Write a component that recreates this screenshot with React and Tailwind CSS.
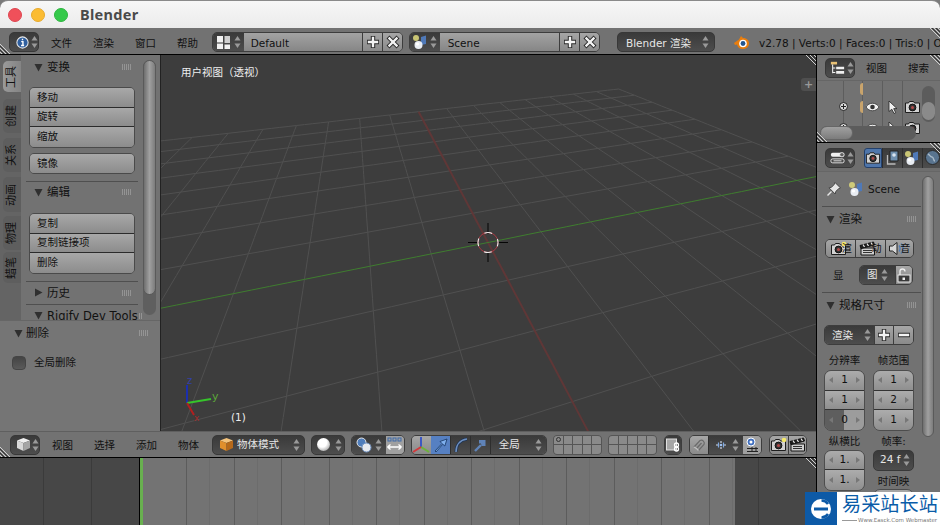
import React from 'react'

const FONT = { fontFamily: '"DejaVu Sans","Noto Sans CJK SC",sans-serif' }

// ground plane projection, fitted by eye against the viewport
const project = (u, v) => {
  const a = 0.1265 * u
  const b = 0.0346 * v
  const d = a + b + 1
  return [(a * 189 + b * 1912 + 327) / d, (a * -72.6 + b * -131 + 187.5) / d]
}

const gridLine = (fn) => {
  const pts = []
  for (let t = 8; t >= -8; t -= 0.25) {
    const [u, v] = fn(t)
    if (0.1265 * u + 0.0346 * v + 1 < 0.06) break
    pts.push(project(u, v).map((n) => n.toFixed(1)).join(','))
  }
  return pts.join(' ')
}

const RANGE = [-8, -7, -6, -5, -4, -3, -2, -1, 0, 1, 2, 3, 4, 5, 6, 7, 8]

const UpDown = () => (
  <svg width="7" height="14" viewBox="0 0 7 14" className="shrink-0">
    <path d="M3.5 1 6.5 5.5H.5z" fill="#9a9a9a" />
    <path d="M3.5 13 6.5 8.5H.5z" fill="#9a9a9a" />
  </svg>
)

const Hatch = ({ className }) => (
  <svg width="12" height="12" viewBox="0 0 12 12" className={className}>
    <path d="M0 2 10 12M0 6 6 12M0 10 2 12" stroke="#d0d0d0" strokeWidth="1" />
    <path d="M0 4 8 12M0 8 4 12" stroke="#333" strokeWidth="1" />
  </svg>
)

const InfoIcon = () => (
  <svg width="15" height="15" viewBox="0 0 15 15">
    <circle cx="7.5" cy="7.5" r="6.5" fill="#2f5f9f" stroke="#e8e8e8" strokeWidth="1.2" />
    <path d="M7.5 3.2v1.8M6 6.5h2v4.3M5.8 11h3.6" stroke="#fff" strokeWidth="1.6" fill="none" />
  </svg>
)

const LayoutIcon = () => (
  <svg width="15" height="15" viewBox="0 0 15 15">
    <path d="M1 1h6v13H1z" fill="#f2f2f2" />
    <path d="M8.5 1H14v7H8.5z" fill="#cfcfcf" />
    <path d="M8.5 9.5H14V14H8.5z" fill="#f2f2f2" />
    <path d="M1 8h6" stroke="#333" />
  </svg>
)

const SceneIcon = () => (
  <svg width="17" height="16" viewBox="0 0 17 16">
    <circle cx="4" cy="4" r="3" fill="#d8d47a" opacity="0.9" />
    <path d="M9 3 14 1.5V10L9 11z" fill="#4f79b8" />
    <circle cx="6.5" cy="11" r="4" fill="#e9edf3" />
    <circle cx="5.5" cy="10" r="1.6" fill="#fff" />
  </svg>
)

const PlusIcon = () => (
  <svg width="16" height="16" viewBox="0 0 16 16">
    <path d="M8 2v12M2 8h12" stroke="#2a2a2a" strokeWidth="4.4" />
    <path d="M8 2.8v10.4M2.8 8h10.4" stroke="#f4f4f4" strokeWidth="2.4" />
  </svg>
)

const MinusIcon = () => (
  <svg width="16" height="16" viewBox="0 0 16 16">
    <path d="M2 8h12" stroke="#2a2a2a" strokeWidth="4.4" />
    <path d="M2.8 8h10.4" stroke="#f4f4f4" strokeWidth="2.4" />
  </svg>
)

const CloseIcon = () => (
  <svg width="16" height="16" viewBox="0 0 16 16">
    <path d="M3 3 13 13M13 3 3 13" stroke="#2a2a2a" strokeWidth="4.2" />
    <path d="M3.6 3.6 12.4 12.4M12.4 3.6 3.6 12.4" stroke="#f4f4f4" strokeWidth="2.2" />
  </svg>
)

const BlenderLogo = () => (
  <svg width="17" height="15" viewBox="0 0 17 15">
    <path d="M1 8 6 4.5 8 1l2 2c4 0 6 2.5 6 5.5S13.5 14 10 14 4.5 12 4 9.5L2 10z" fill="#e87d0d" />
    <circle cx="10" cy="8.5" r="3.8" fill="#fff" />
    <circle cx="10" cy="8.5" r="2.4" fill="#23568f" />
  </svg>
)

const CubeIcon = ({ top = '#f0f0f0', left = '#d8d8d8', right = '#a5a5a5' }) => (
  <svg width="15" height="15" viewBox="0 0 15 15">
    <path d="M7.5 1 14 3.5 7.5 6 1 3.5z" fill={top} />
    <path d="M1 3.5 7.5 6v8L1 11z" fill={left} />
    <path d="M14 3.5 7.5 6v8l6.5-3z" fill={right} />
  </svg>
)

const SphereIcon = () => (
  <svg width="15" height="15" viewBox="0 0 15 15">
    <defs>
      <radialGradient id="ball" cx="0.4" cy="0.35" r="0.7">
        <stop offset="0.5" stopColor="#fff" />
        <stop offset="1" stopColor="#a8a8a8" />
      </radialGradient>
    </defs>
    <circle cx="7.5" cy="7.5" r="6.5" fill="url(#ball)" />
  </svg>
)

const OverlapIcon = () => (
  <svg width="16" height="16" viewBox="0 0 16 16">
    <circle cx="5.5" cy="5.5" r="4.5" fill="#4f7dbb" stroke="#e6e6e6" />
    <circle cx="10.5" cy="10.5" r="4.5" fill="#e6e9ee" stroke="#6d8fbe" />
  </svg>
)

const ProportionalIcon = () => (
  <svg width="17" height="17" viewBox="0 0 17 17">
    <g fill="none" stroke="#3f6aa8" strokeWidth="1">
      <rect x="2" y="2" width="3" height="3" />
      <rect x="7" y="2" width="3" height="3" />
      <rect x="12" y="2" width="3" height="3" />
    </g>
    <path d="M1.5 11h14M1.5 11l3-2.5M1.5 11l3 2.5M15.5 11l-3-2.5M15.5 11l-3 2.5" stroke="#fff" strokeWidth="1.3" fill="none" />
  </svg>
)

const AxesIcon = () => (
  <svg width="18" height="18" viewBox="0 0 18 18">
    <path d="M9 11V1" stroke="#3c57c2" strokeWidth="2" />
    <path d="M9 11 17 16" stroke="#6cb33a" strokeWidth="2" />
    <path d="M9 11 1 16" stroke="#d2393c" strokeWidth="2" />
  </svg>
)

const ArrowIcon = ({ stroke = '#15335f', fill = '#7fb0ee' }) => (
  <svg width="16" height="16" viewBox="0 0 16 16">
    <path d="M2 14 9 6.5 7 4.5 14 2 11.8 9 9.8 7.2 3 15z" fill={fill} stroke={stroke} strokeWidth="0.8" />
  </svg>
)

const ArcIcon = () => (
  <svg width="16" height="16" viewBox="0 0 16 16">
    <path d="M3 15C3 8 7 3 14 2" fill="none" stroke="#1e3454" strokeWidth="3" />
    <path d="M3 15C3 8 7 3 14 2" fill="none" stroke="#6d8fc0" strokeWidth="1.6" />
  </svg>
)

const ScaleIcon = () => (
  <svg width="16" height="16" viewBox="0 0 16 16">
    <path d="M3 14 9 8" stroke="#5f83b8" strokeWidth="2.4" />
    <path d="M7 3h6.5v6H9.5L9 6.5H7z" fill="#5f83b8" />
  </svg>
)

const LockIcon = () => (
  <svg width="16" height="16" viewBox="0 0 16 16">
    <rect x="1.5" y="2" width="10" height="11" fill="#a5a5a5" stroke="#e0e0e0" />
    <rect x="9.5" y="6" width="4" height="4" rx="2" fill="none" stroke="#fff" strokeWidth="1.3" />
    <rect x="9.5" y="10" width="4" height="4" rx="2" fill="none" stroke="#fff" strokeWidth="1.3" />
  </svg>
)

const MagnetIcon = () => (
  <svg width="16" height="16" viewBox="0 0 16 16">
    <path d="M3 10 9 3.5a3 3 0 0 1 4 4L7.5 13.5" fill="none" stroke="#6a6a6a" strokeWidth="1.2" />
    <path d="M5.5 11.5 10.5 6" fill="none" stroke="#6a6a6a" strokeWidth="1.2" />
    <path d="M3 10 5.5 11.5 7.5 13.5" fill="none" stroke="#c0c0c0" strokeWidth="1.2" />
  </svg>
)

const SnapModeIcon = () => (
  <svg width="14" height="14" viewBox="0 0 14 14">
    <path d="M2 7h2.5M9.5 7H12M7 3v2M7 9v2" stroke="#cfd8e8" strokeWidth="1.2" />
    <path d="M4.5 4.5V9.5M9.5 4.5V9.5" stroke="#7fa8e0" strokeWidth="1.2" />
    <circle cx="7" cy="7" r="1.3" fill="#9dc0f0" />
  </svg>
)

const SnapIcon = () => (
  <svg width="16" height="16" viewBox="0 0 16 16">
    <path d="M3 11.5h11M8 10v5M12 10v5M3 14.5h11" stroke="#222" strokeWidth="1" />
    <circle cx="7" cy="5" r="4" fill="#3f6fc0" stroke="#fff" />
    <circle cx="7" cy="5" r="1.5" fill="#fff" />
  </svg>
)

const CameraIcon = ({ spark = true }) => (
  <svg width="17" height="15" viewBox="0 0 17 15">
    <path d="M1.5 4h3l1-1.5h4l1 1.5h5v9.500h-14z" fill="#d2d2d2" stroke="#1d1d1d" />
    <circle cx="8.5" cy="8.5" r="3.4" fill="#333" stroke="#111" />
    <circle cx="8.5" cy="8.5" r="1.5" fill="#b04a4a" />
    {spark && <circle cx="14" cy="3" r="2.3" fill="#f5e96a" />}
  </svg>
)

const ClapperIcon = () => (
  <svg width="17" height="15" viewBox="0 0 17 15">
    <path d="M2 7h13.5v7H2z" fill="#cfcfcf" stroke="#151515" />
    <path d="M1 4.5 14.5 1l1 3L2 7.5z" fill="#222" stroke="#111" />
    <path d="M4 3.5 5.5 6M8 2.5 9.5 5M12 1.5 13.5 4" stroke="#eee" strokeWidth="1.2" />
    <path d="M4 9.5h9M4 11.5h9" stroke="#333" />
  </svg>
)

const SpeakerIcon = () => (
  <svg width="17" height="15" viewBox="0 0 17 15">
    <path d="M1.5 5h3L9 1.5v12L4.5 10h-3z" fill="#d8d8d8" stroke="#222" />
    <path d="M11 4.5c1.5 2 1.5 4 0 6" fill="none" stroke="#4f7dbb" strokeWidth="1.3" />
    <path d="M13 2.5c2.5 3 2.5 7 0 10" fill="none" stroke="#4f7dbb" strokeWidth="1.3" />
  </svg>
)

const OutlinerIcon = () => (
  <svg width="17" height="16" viewBox="0 0 17 16">
    <path d="M1 1h7v3H1z" fill="#e8c074" />
    <path d="M3 4v10M3 8h3M3 13h3" stroke="#f0f0f0" strokeWidth="1.2" fill="none" />
    <path d="M7 6.5h9v3H7zM7 11.5h9v3H7z" fill="#f0f0f0" />
  </svg>
)

const PropertiesIcon = () => (
  <svg width="17" height="14" viewBox="0 0 17 14">
    <rect x="1" y="1" width="15" height="4.5" rx="2" fill="#f0f0f0" />
    <rect x="11" y="1" width="5" height="4.5" rx="2" fill="#5f5f5f" stroke="#f0f0f0" />
    <rect x="1" y="8" width="15" height="4.5" rx="2" fill="#4a4a4a" stroke="#f0f0f0" />
    <path d="M4 10.2h9" stroke="#f0f0f0" />
  </svg>
)

const ImageIcon = () => (
  <svg width="16" height="15" viewBox="0 0 16 15">
    <path d="M5 1h8v10H5z" fill="#6f8fae" stroke="#222" />
    <path d="M2.5 5v9h8" fill="none" stroke="#bbb" strokeWidth="1.3" />
    <circle cx="9" cy="5" r="1.8" fill="#d9e3ee" />
  </svg>
)

const WorldIcon = () => (
  <svg width="17" height="17" viewBox="0 0 17 17">
    <circle cx="8.5" cy="8.5" r="7" fill="#59748f" stroke="#2a2a2a" />
    <path d="M4 5c2 1 2 3 4 3s1 4 3 4" fill="none" stroke="#a9b9c7" strokeWidth="1.4" />
  </svg>
)

const PinIcon = () => (
  <svg width="16" height="16" viewBox="0 0 16 16">
    <path d="M9 1.5 14.5 7 12.5 7.8 9.7 10.5 9.2 13 3 6.8 5.5 6.3 8.2 3.5z" fill="#e6e6e6" stroke="#333" strokeWidth="0.8" />
    <path d="M5.5 10.5 1.5 14.5" stroke="#e6e6e6" strokeWidth="1.5" />
  </svg>
)

const Eye = () => (
  <svg width="15" height="10" viewBox="0 0 15 10">
    <path d="M1 5c3-5 10-5 13 0-3 5-10 5-13 0z" fill="#f0f0f0" stroke="#333" strokeWidth="0.8" />
    <circle cx="7.5" cy="5" r="2.3" fill="#333" />
  </svg>
)

const Cursor = () => (
  <svg width="10" height="14" viewBox="0 0 10 14">
    <path d="M1 1v10.5l2.800-2.300L6 13.5l1.700-.8-2-4.100H9z" fill="#f0f0f0" stroke="#222" strokeWidth="0.8" />
  </svg>
)

const PlusCircle = () => (
  <svg width="9" height="9" viewBox="0 0 9 9">
    <circle cx="4.5" cy="4.5" r="4" fill="#d8d8d8" stroke="#222" />
    <path d="M4.5 2v5M2 4.5h5" stroke="#222" />
  </svg>
)

const Triangle = ({ open = true }) => (
  <svg width="9" height="9" viewBox="0 0 9 9" className="shrink-0">
    <path d={open ? 'M0.5 1h8L4.5 8.5z' : 'M1 0.5 8.5 4.5 1 8.5z'} fill="#2f2f2f" />
  </svg>
)

const Grip = () => (
  <svg width="12" height="6" viewBox="0 0 12 6" className="shrink-0">
    <path d="M1 1h10M1 3h10M1 5h10" stroke="#b5b5b5" strokeDasharray="1 1" />
  </svg>
)

const Sel = ({ className = '', children }) => (
  <div className={`flex items-center h-[20px] rounded-[5px] border border-[#383838] bg-linear-to-b from-[#3a3a3a] to-[#4d4d4d] text-[#e6e6e6] ${className}`}>
    {children}
  </div>
)

const Group = ({ className = '', children }) => (
  <div className={`flex h-[20px] rounded-[5px] overflow-hidden border border-[#3d3d3d] shrink-0 ${className}`}>{children}</div>
)

const IconCell = ({ className = '', children }) => (
  <div className={`flex items-center justify-center h-full bg-linear-to-b from-[#a6a6a6] to-[#8a8a8a] border-l border-[#3d3d3d] first:border-l-0 ${className}`}>
    {children}
  </div>
)

const DarkCell = ({ className = '', children }) => (
  <div className={`flex items-center justify-center h-full bg-linear-to-b from-[#3a3a3a] to-[#4d4d4d] border-l border-[#2e2e2e] first:border-l-0 ${className}`}>
    {children}
  </div>
)

// dark cell holding a label on the left and the up/down arrows on the right
const DarkLabelCell = ({ className = '', label }) => (
  <div className={`flex items-center justify-between h-full bg-linear-to-b from-[#3a3a3a] to-[#4d4d4d] border-l border-[#2e2e2e] text-[10.5px] text-[#e6e6e6] ${className}`}>
    <span className="pt-[1px]">{label}</span>
    <UpDown />
  </div>
)

const Layers = ({ dot = false }) => (
  <div className="grid grid-cols-5 grid-rows-2 w-[49px] h-[20px] rounded-[4px] overflow-hidden border border-[#555] bg-[#555] gap-px shrink-0">
    {Array.from({ length: 10 }, (_, i) => (
      <div key={i} className="bg-[#8a8a8a] flex items-center justify-center">
        {dot && i === 0 && <div className="w-[5px] h-[5px] rounded-full border border-[#333]" />}
      </div>
    ))}
  </div>
)

const Menus = ({ items, className = '' }) => (
  <div className={`flex gap-[21px] text-[10.5px] text-[#111] ${className}`}>
    {items.map((m) => (
      <span key={m} className="w-[21px] whitespace-nowrap">{m}</span>
    ))}
  </div>
)

const TopBar = () => (
  <div className="relative flex items-center h-[27px] pt-[2px] pl-[9px] bg-[#727272] border-b border-black overflow-hidden">
    <Hatch className="absolute left-0 bottom-0" />
    <Hatch className="absolute right-0 top-0 rotate-180" />
    <Sel className="w-[30px] shrink-0 pl-[6px] gap-[2px]"><InfoIcon /><UpDown /></Sel>
    <Menus items={['文件', '渲染', '窗口', '帮助']} className="ml-[12px] pt-[4px]" />
    <Group className="ml-[14px] w-[191px]">
      <DarkCell className="w-[31px] gap-[3px]"><LayoutIcon /><UpDown /></DarkCell>
      <div className="w-[120px] flex items-center pl-[7px] pt-[4px] text-[10.5px] text-[#111] bg-linear-to-b from-[#a3a3a3] to-[#868686]">Default</div>
      <IconCell className="w-[20px]"><PlusIcon /></IconCell>
      <IconCell className="w-[20px]"><CloseIcon /></IconCell>
    </Group>
    <Group className="ml-[6px] w-[191px]">
      <DarkCell className="w-[30px] gap-[1px]"><SceneIcon /><UpDown /></DarkCell>
      <div className="w-[121px] flex items-center pl-[8px] pt-[4px] text-[10.5px] text-[#111] bg-linear-to-b from-[#a3a3a3] to-[#868686]">Scene</div>
      <IconCell className="w-[20px]"><PlusIcon /></IconCell>
      <IconCell className="w-[20px]"><CloseIcon /></IconCell>
    </Group>
    <Sel className="ml-[17px] w-[98px] shrink-0 pl-[8px] pr-[5px] justify-between text-[10.5px]"><span className="pt-[4px]">Blender 渲染</span><UpDown /></Sel>
    <div className="ml-[18px] shrink-0"><BlenderLogo /></div>
    <span className="ml-[9px] pt-[4px] text-[10.5px] text-[#111] whitespace-nowrap">v2.78 | Verts:0 | Faces:0 | Tris:0 | Objects:0/3</span>
  </div>
)

const SectionHead = ({ title, open = true, className = '' }) => (
  <div className={`flex items-center shrink-0 ${className}`}>
    <Triangle open={open} />
    <span className="ml-[4px] pt-[2px] flex-1 text-[11.5px] text-[#111] whitespace-nowrap">{title}</span>
    <Grip />
  </div>
)

const Divider = ({ className = '' }) => <div className={`h-px bg-[#4f4f4f] ${className}`} />

const ToolGroup = ({ items, className = '' }) => (
  <div className={`w-[106px] shrink-0 rounded-[5px] overflow-hidden border border-[#4a4a4a] ${className}`}>
    {items.map((t) => (
      <div key={t} className="h-[19.5px] pl-[7px] pt-[1px] flex items-center text-[10.5px] text-[#111] bg-linear-to-b from-[#a8a8a8] to-[#8c8c8c] border-b border-[#2b2b2b] last:border-b-0 whitespace-nowrap">
        {t}
      </div>
    ))}
  </div>
)

const TABS = [
  { label: '工具', cls: 'h-[31px] mt-[6px] bg-linear-to-r from-[#9a9a9a] to-[#848484]' },
  { label: '创建', cls: 'h-[34px] mt-[7px] bg-[#5e5e5e]' },
  { label: '关系', cls: 'h-[34px] mt-[5px] bg-[#5e5e5e]' },
  { label: '动画', cls: 'h-[35px] mt-[5px] bg-[#5e5e5e]' },
  { label: '物理', cls: 'h-[34px] mt-[4px] bg-[#5e5e5e]' },
  { label: '蜡笔', cls: 'h-[31px] mt-[2px] bg-[#5e5e5e]' },
]

const LeftPanel = () => (
  <div className="w-[160px] shrink-0 flex flex-col">
    <div className="h-[265px] flex bg-[#727272] overflow-hidden">
      <div className="w-[21px] shrink-0 bg-[#646464] flex flex-col items-end">
        {TABS.map((t) => (
          <div key={t.label} className={`w-[18px] shrink-0 rounded-l-[5px] flex items-center justify-center text-[11px] text-[#111] ${t.cls}`}>
            <span className="[writing-mode:vertical-rl] [text-orientation:sideways] rotate-180 whitespace-nowrap">{t.label}</span>
          </div>
        ))}
      </div>
      <div className="w-[122px] shrink-0 overflow-hidden flex flex-col">
        <SectionHead title="变换" className="h-[24px] ml-[13px] mr-[10px]" />
        <ToolGroup items={['移动', '旋转', '缩放']} className="mt-[8px] ml-[8px]" />
        <ToolGroup items={['镜像']} className="mt-[5px] ml-[8px]" />
        <Divider className="mt-[7px] mx-[5px] shrink-0" />
        <SectionHead title="编辑" className="h-[20px] ml-[13px] mr-[10px]" />
        <ToolGroup items={['复制', '复制链接项', '删除']} className="mt-[11px] ml-[8px]" />
        <Divider className="mt-[7px] mx-[5px] shrink-0" />
        <SectionHead title="历史" open={false} className="h-[22px] ml-[13px] mr-[10px]" />
        <Divider className="mx-[5px] shrink-0" />
        <SectionHead title="Rigify Dev Tools" className="h-[22px] ml-[13px] mr-[10px]" />
      </div>
      <div className="w-[13px] shrink-0 mt-[5px] h-[255px] rounded-full bg-[#5f5f5f]">
        <div className="h-[235px] rounded-full border border-[#5a5a5a] bg-linear-to-r from-[#6f6f6f] via-[#a0a0a0] to-[#7c7c7c]" />
      </div>
    </div>
    <div className="flex-1 bg-[#757575] border-t border-[#666] pl-[12px] pr-[10px]">
      <div className="flex items-center h-[24px] pl-[2px]">
        <Triangle />
        <span className="ml-[3px] pt-[2px] flex-1 text-[11.5px] text-[#111]">删除</span>
        <Grip />
      </div>
      <div className="flex items-center mt-[10px]">
        <div className="w-[14px] h-[14px] rounded-[4px] border border-[#454545] bg-linear-to-b from-[#444] to-[#5a5a5a]" />
        <span className="ml-[8px] text-[10.5px] text-[#111]">全局删除</span>
      </div>
    </div>
  </div>
)

const Viewport = () => (
  <div className="relative w-[656px] shrink-0 border-l border-[#222] bg-[#3d3d3d] overflow-hidden">
    <svg width="656" height="376" viewBox="0 0 656 376" className="block">
      {RANGE.filter((n) => n !== 0).map((n) => (
        <g key={n} fill="none" stroke="#505050" strokeWidth="1">
          <polyline points={gridLine((t) => [t, n])} />
          <polyline points={gridLine((t) => [n, t])} />
        </g>
      ))}
      <polyline points={gridLine((t) => [t, 0])} fill="none" stroke="#5f3737" strokeWidth="2" />
      <polyline points={gridLine((t) => [0, t])} fill="none" stroke="#3f7d2f" strokeWidth="1" />
      <path d="M327 168v11M327 197v10M307 187.5h11M336 187.5h11" stroke="#050505" strokeWidth="1" />
      <circle cx="327" cy="187.5" r="10" fill="none" stroke="#a83a44" strokeWidth="1" />
      <circle cx="327" cy="187.5" r="10" fill="none" stroke="#eeeeee" strokeWidth="1.1" strokeDasharray="7.85 7.85" strokeDashoffset="3.9" />
      <path d="M26 348V330" stroke="#1b2fae" strokeWidth="2" />
      <path d="M26 348 50 344" stroke="#36c42b" strokeWidth="2" />
      <path d="M26 348 33 360" stroke="#b11f1f" strokeWidth="2" />
      <text x="26" y="329" fontSize="10" fill="#3340a8" style={FONT}>z</text>
      <text x="51" y="345" fontSize="11" fill="#5ca53a" style={FONT}>y</text>
      <text x="33" y="366" fontSize="9" fill="#a32a2a" style={FONT}>x</text>
    </svg>
    <span className="absolute left-[20px] top-[10px] text-[10.5px] text-[#eee] whitespace-nowrap">用户视图（透视）</span>
    <span className="absolute left-[70px] top-[355px] text-[10.5px] text-[#eee]">(1)</span>
    <div className="absolute left-[640px] top-[23px] w-[15px] h-[13px] rounded-l-[3px] bg-[#4f4f4f] flex items-center justify-center text-[11px] font-bold leading-none text-[#999]">+</div>
    <Hatch className="absolute right-0 top-0 rotate-180" />
  </div>
)

const TreeRow = ({ icons = true, clipped = false, className = '' }) => (
  <div className={`flex shrink-0 ${className}`}>
    <div className="w-[26px]" />
    <div className="w-[19px] border-l border-[#5d5d5d] flex items-center relative">
      {icons && <div className="absolute -left-[5px] flex items-center"><PlusCircle /></div>}
      {!clipped && <div className="ml-auto -mr-[1px] w-[3px] h-[12px] rounded-l-full bg-[#c9a46c]" />}
    </div>
    <div className="w-[20px] border-l border-[#5d5d5d] flex items-center justify-center">{icons && <Eye />}</div>
    <div className="w-[20px] border-l border-[#5d5d5d] flex items-center justify-center">{icons && <Cursor />}</div>
    <div className="w-[20px] border-l border-[#5d5d5d] flex items-center justify-center">{icons && <CameraIcon spark={false} />}</div>
  </div>
)

const Outliner = () => (
  <div className="relative h-[88px] shrink-0 bg-[#727272] border-b border-black overflow-hidden">
    <Hatch className="absolute right-0 top-0 rotate-180" />
    <div className="flex items-center h-[26px] pl-[8px] border-b border-[#666]">
      <Sel className="w-[30px] shrink-0 pl-[4px] gap-[2px]"><OutlinerIcon /><UpDown /></Sel>
      <Menus items={['视图', '搜索']} className="ml-[11px] pt-[2px]" />
    </div>
    <TreeRow icons={false} className="h-[15px]" />
    <TreeRow className="h-[21px]" />
    <TreeRow clipped className="h-[21px]" />
    <div className="absolute left-[3px] top-[71px] w-[96px] h-[14px] rounded-full bg-[#5c5c5c]">
      <div className="w-[33px] h-full rounded-full bg-linear-to-b from-[#a0a0a0] to-[#7c7c7c] border border-[#666]" />
    </div>
    <div className="absolute left-[105px] top-[31px] w-[13px] h-[36px] rounded-full bg-[#5c5c5c]">
      <div className="mt-[16px] h-[18px] rounded-full bg-[#8a8a8a]" />
    </div>
    <Hatch className="absolute left-0 bottom-0" />
  </div>
)

const NumRow = ({ value, slider = false }) => (
  <div className={`relative h-[19.5px] flex items-center justify-between px-[4px] text-[10.5px] text-[#111] border-b border-[#333] last:border-b-0 ${slider ? 'bg-linear-to-r from-[#5e5e5e] from-50% to-[#9c9c9c] to-50%' : 'bg-linear-to-b from-[#acacac] to-[#8f8f8f]'}`}>
    <span className="w-0 h-0 border-y-[3px] border-y-transparent border-r-[4px] border-r-[#777]" />
    <span>{value}</span>
    <span className="w-0 h-0 border-y-[3px] border-y-transparent border-l-[4px] border-l-[#777]" />
  </div>
)

const NumGroup = ({ rows }) => (
  <div className="w-[41px] h-fit rounded-[7px] overflow-hidden border border-[#4d4d4d] shrink-0">
    {rows.map((r, i) => <NumRow key={i} value={r.v} slider={r.slider} />)}
  </div>
)

const Properties = () => (
  <div className="flex-1 bg-[#727272] flex flex-col overflow-hidden relative">
    <Hatch className="absolute right-0 top-0 rotate-180 z-10" />
    <div className="flex items-center h-[29px] shrink-0 pl-[8px] pt-[1px] bg-[#6e6e6e] border-b border-[#666]">
      <Sel className="w-[30px] shrink-0 pl-[4px] gap-[2px]"><PropertiesIcon /><UpDown /></Sel>
      <div className="flex h-[20px] ml-[9px] shrink-0">
        <div className="w-[18px] h-full flex items-center justify-center rounded-l-[3px] bg-[#4f76ab] border border-[#24406a]"><CameraIcon spark={false} /></div>
        <DarkCell className="w-[20px]"><ImageIcon /></DarkCell>
        <DarkCell className="w-[20px]"><SceneIcon /></DarkCell>
        <DarkCell className="w-[20px]"><WorldIcon /></DarkCell>
      </div>
    </div>
    <div className="flex flex-1 min-h-0">
      <div className="w-[104px] shrink-0 flex flex-col">
        <div className="flex items-center h-[34px] shrink-0 pl-[9px]">
          <PinIcon />
          <div className="ml-[6px]"><SceneIcon /></div>
          <span className="ml-[3px] pt-[2px] text-[10.5px] text-[#111]">Scene</span>
        </div>
        <Divider className="ml-[5px] shrink-0" />
        <div className="h-[24px] ml-[9px] mr-[3px] shrink-0 flex items-center">
          <SectionHead title="渲染" className="w-full" />
        </div>
        <div className="ml-[8px] mt-[8px] w-[89px] h-[19px] flex rounded-[5px] overflow-hidden border border-[#3d3d3d] shrink-0 text-[10px] text-[#111]">
          <IconCell className="w-[30px] gap-0"><CameraIcon /><span className="-ml-[5px]">渲</span></IconCell>
          <IconCell className="w-[30px] gap-0"><ClapperIcon /><span className="-ml-[5px]">动</span></IconCell>
          <IconCell className="w-[29px] gap-0"><SpeakerIcon /><span className="-ml-[5px]">音</span></IconCell>
        </div>
        <div className="flex items-center mt-[7px] h-[20px] shrink-0 ml-[16px] text-[10.5px] text-[#111]">
          <span className="w-[26px] pt-[1px]">显</span>
          <Group className="w-[54px]">
            <DarkCell className="w-[36px] gap-[3px] text-[#e6e6e6]"><span>图</span><UpDown /></DarkCell>
            <IconCell className="w-[18px]">
              <svg width="14" height="15" viewBox="0 0 14 15">
                <path d="M3 7V3.5a2.5 2.5 0 0 1 5 0" fill="none" stroke="#eee" strokeWidth="1.3" />
                <rect x="1" y="7" width="12" height="7" fill="#3a3a3a" stroke="#eee" />
                <rect x="5.5" y="9.5" width="2.5" height="2.5" fill="#eee" />
              </svg>
            </IconCell>
          </Group>
        </div>
        <Divider className="mt-[7px] ml-[5px] shrink-0" />
        <div className="h-[24px] ml-[9px] mr-[3px] shrink-0 flex items-center">
          <SectionHead title="规格尺寸" className="w-full" />
        </div>
        <Group className="ml-[7px] mt-[8px] w-[90px]">
          <DarkLabelCell label="渲染" className="w-[50px] pl-[7px] pr-[3px] border-l-0" />
          <IconCell className="w-[20px]"><PlusIcon /></IconCell>
          <IconCell className="w-[20px]"><MinusIcon /></IconCell>
        </Group>
        <div className="flex mt-[8px] ml-[7px] gap-[8px] h-[15px] shrink-0 text-[10.5px] text-[#111] leading-[15px]">
          <span className="w-[41px] text-center whitespace-nowrap">分辨率</span>
          <span className="w-[41px] text-center whitespace-nowrap">帧范围</span>
        </div>
        <div className="flex ml-[7px] mt-[2px] gap-[8px] shrink-0">
          <NumGroup rows={[{ v: '1' }, { v: '1' }, { v: '0', slider: true }]} />
          <NumGroup rows={[{ v: '1' }, { v: '2' }, { v: '1' }]} />
        </div>
        <div className="flex mt-[3px] ml-[7px] gap-[8px] h-[15px] shrink-0 text-[10.5px] text-[#111] leading-[15px]">
          <span className="w-[41px] text-center whitespace-nowrap">纵横比</span>
          <span className="w-[41px] text-center whitespace-nowrap">帧率:</span>
        </div>
        <div className="flex ml-[7px] mt-[1px] gap-[8px] shrink-0">
          <NumGroup rows={[{ v: '1.' }, { v: '1.' }]} />
          <div className="flex flex-col w-[41px] shrink-0 text-[10.5px] text-[#111]">
            <Sel className="justify-between pl-[6px] pr-[3px] h-[21px]"><span>24 f</span><UpDown /></Sel>
            <span className="text-center mt-[3px] leading-[15px] whitespace-nowrap">时间映</span>
            <div className="h-[8px] rounded-t-[7px] border border-[#4d4d4d] bg-[#a5a5a5]" />
          </div>
        </div>
      </div>
      <div className="w-[12px] ml-[1px] shrink-0 mt-[4px] h-[261px] rounded-full border border-[#5a5a5a] bg-linear-to-r from-[#6f6f6f] via-[#a0a0a0] to-[#7c7c7c]" />
    </div>
  </div>
)

const RightPanel = () => (
  <div className="flex-1 min-w-0 flex flex-col border-l border-black overflow-hidden">
    <Outliner />
    <Properties />
  </div>
)

const BottomBar = () => (
  <div className="relative flex items-center h-[27px] pl-[10px] bg-[#727272] border-t border-[#5f5f5f] border-b-black border-b overflow-hidden">
    <Hatch className="absolute left-0 bottom-0" />
    <Sel className="w-[30px] shrink-0 pl-[5px] gap-[1px]"><CubeIcon /><UpDown /></Sel>
    <Menus items={['视图', '选择', '添加', '物体']} className="ml-[12px] pt-[2px]" />
    <Sel className="ml-[13px] w-[93px] shrink-0 pl-[6px] pr-[4px] text-[10.5px]">
      <CubeIcon top="#f3c27b" left="#e08f2c" right="#b5691a" />
      <span className="ml-[3px] pt-[1px] flex-1 whitespace-nowrap">物体模式</span>
      <UpDown />
    </Sel>
    <Sel className="ml-[6px] w-[34px] shrink-0 pl-[4px] gap-[4px]"><SphereIcon /><UpDown /></Sel>
    <Group className="ml-[6px] w-[54px]">
      <DarkCell className="w-[35px] gap-[3px]"><OverlapIcon /><UpDown /></DarkCell>
      <div className="w-[19px] flex items-center justify-center bg-[#a0a0a0]"><ProportionalIcon /></div>
    </Group>
    <Group className="ml-[6px] w-[136px]">
      <IconCell className="w-[19px]"><AxesIcon /></IconCell>
      <div className="w-[20px] flex items-center justify-center bg-[#5680c2]"><ArrowIcon /></div>
      <DarkCell className="w-[20px]"><ArcIcon /></DarkCell>
      <DarkCell className="w-[20px]"><ScaleIcon /></DarkCell>
      <DarkLabelCell label="全局" className="w-[57px] pl-[8px] pr-[4px]" />
    </Group>
    <div className="ml-[6px] shrink-0"><Layers dot /></div>
    <div className="ml-[6px] shrink-0"><Layers /></div>
    <Group className="ml-[7px] w-[18px]"><DarkCell className="w-full"><LockIcon /></DarkCell></Group>
    <Group className="ml-[7px] w-[73px]">
      <IconCell className="w-[19px]"><MagnetIcon /></IconCell>
      <DarkCell className="w-[35px] gap-[4px]"><SnapModeIcon /><UpDown /></DarkCell>
      <div className="w-[19px] flex items-center justify-center bg-[#a0a0a0]"><SnapIcon /></div>
    </Group>
    <Group className="ml-[7px] w-[38px]">
      <IconCell className="w-[19px]"><CameraIcon /></IconCell>
      <IconCell className="w-[19px]"><ClapperIcon /></IconCell>
    </Group>
  </div>
)

const LIGHT_CELLS = [0, 1, 2, 3, 4, 5, 6, 7, 8, 9, 10, 11]

const Timeline = () => (
  <div className="relative flex h-[67px]">
    <div className="flex w-[139px] shrink-0 bg-[#474747]">
      <div className="w-[44px] border-r border-[#3b3b3b]" />
      <div className="w-[47.5px] border-r border-[#3b3b3b]" />
      <div className="w-[47.5px]" />
    </div>
    <div className="w-[1px] shrink-0 bg-black" />
    <div className="w-[3px] shrink-0 bg-[#68b04f]" />
    <div className="flex w-[592px] shrink-0 bg-[#737373] overflow-hidden">
      <div className="w-[44px] shrink-0 border-r border-[#5c5c5c]" />
      {LIGHT_CELLS.map((n) => (
        <div key={n} className="w-[47.5px] shrink-0 border-r border-[#5c5c5c] flex">
          <div className="w-1/2 border-r border-[#6c6c6c]" />
        </div>
      ))}
    </div>
    <div className="flex flex-1 bg-[#474747]">
      <div className="w-[24px] border-r border-[#3b3b3b]" />
    </div>
    <Hatch className="absolute right-0 top-0 rotate-180" />
  </div>
)

const Watermark = () => (
  <div className="absolute right-0 bottom-0 w-[135px] h-[33px] bg-white flex">
    <div className="w-[32px] h-full bg-[#0d5aa7] flex items-center justify-center shrink-0">
      <svg width="24" height="24" viewBox="0 0 24 24">
        <circle cx="12" cy="12" r="10" fill="#fff" />
        <path d="M5 10.5h14v3H5z" fill="#0d5aa7" />
        <path d="M19 7c-2-3-5-3.5-6.5-3.5M19 17c-2 3-5 3.5-6.5 3.5" stroke="#0d5aa7" strokeWidth="2.5" fill="none" />
      </svg>
    </div>
    <div className="ml-[5px] flex flex-col min-w-0">
      <span className="text-[19.2px] leading-[24px] text-[#0a5ca8] whitespace-nowrap mt-[1px]">易采站长站</span>
      <div className="flex items-center">
        <div className="w-[15px] h-px bg-[#999] shrink-0" />
        <span className="ml-[1px] text-[5.5px] leading-[7px] text-[#777] whitespace-nowrap">Www.Easck.Com Webmaster</span>
      </div>
    </div>
  </div>
)

export default function App() {
  return (
    <div style={FONT} className="relative w-[940px] h-[525px] overflow-hidden bg-[#7a7a7a]">
      <div className="flex items-center h-[28px] rounded-t-[8px] border-t border-[#8a8a8a] bg-linear-to-b from-[#f7f7f7] to-[#ebebeb]">
        <div className="ml-[8px] w-[14px] h-[14px] rounded-full bg-[#f0505a] border border-[#de4650]" />
        <div className="ml-[9px] w-[14px] h-[14px] rounded-full bg-[#fbbc33] border border-[#e8aa2c]" />
        <div className="ml-[9px] w-[14px] h-[14px] rounded-full bg-[#35c94a] border border-[#2db63f]" />
        <span className="ml-[12px] text-[14.5px] tracking-[0.3px] font-bold text-[#4a4a4a]" style={{ fontFamily: '"Noto Sans",sans-serif' }}>Blender</span>
      </div>
      <TopBar />
      <div className="flex h-[470px]">
        <div className="w-[816px] shrink-0 flex flex-col">
          <div className="flex h-[376px] shrink-0">
            <LeftPanel />
            <Viewport />
          </div>
          <BottomBar />
          <Timeline />
        </div>
        <RightPanel />
      </div>
      <Watermark />
    </div>
  )
}
